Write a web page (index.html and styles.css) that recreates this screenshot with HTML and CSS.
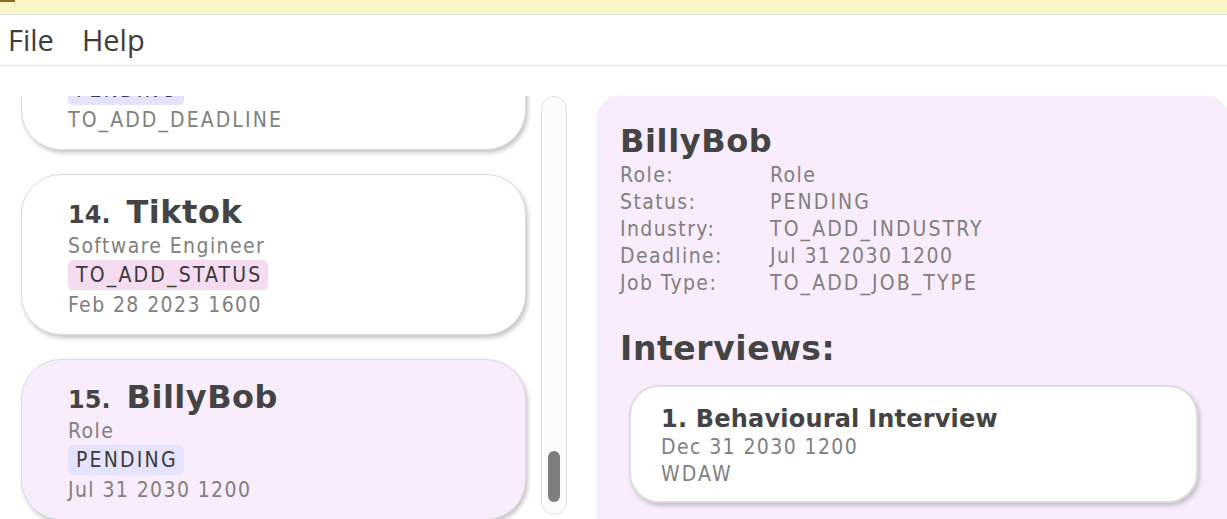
FILE: index.html
```html
<!DOCTYPE html>
<html>
<head>
<meta charset="utf-8">
<link rel="stylesheet" href="styles.css">
</head>
<body>
<div class="titlebar"><span class="titlemark"></span></div>
<div class="menubar">
  <span class="menu-item">File</span>
  <span class="menu-item">Help</span>
</div>
<div class="main">
  <div class="list-viewport">
    <div class="list-inner">
      <div class="card">
        <div class="card-spacer"></div>
        <div><span class="badge badge-pending">PENDING</span></div>
        <div class="line caps">TO_ADD_DEADLINE</div>
      </div>
      <div class="card">
        <div class="card-title"><span class="idx">14.</span><span class="name">Tiktok</span></div>
        <div class="line">Software Engineer</div>
        <div><span class="badge badge-status">TO_ADD_STATUS</span></div>
        <div class="line">Feb 28 2023 1600</div>
      </div>
      <div class="card card-selected">
        <div class="card-title"><span class="idx">15.</span><span class="name">BillyBob</span></div>
        <div class="line">Role</div>
        <div><span class="badge badge-pending">PENDING</span></div>
        <div class="line">Jul 31 2030 1200</div>
      </div>
    </div>
  </div>
  <div class="scrollbar"><div class="thumb"></div></div>
  <div class="detail">
    <div class="detail-name">BillyBob</div>
    <div class="rows">
      <div class="row"><span class="label">Role:</span><span>Role</span></div>
      <div class="row"><span class="label">Status:</span><span class="caps">PENDING</span></div>
      <div class="row"><span class="label">Industry:</span><span class="caps">TO_ADD_INDUSTRY</span></div>
      <div class="row"><span class="label">Deadline:</span><span>Jul 31 2030 1200</span></div>
      <div class="row"><span class="label">Job Type:</span><span class="caps">TO_ADD_JOB_TYPE</span></div>
    </div>
    <div class="section-title">Interviews:</div>
    <div class="interview">
      <div class="interview-title">1. Behavioural Interview</div>
      <div class="line">Dec 31 2030 1200</div>
      <div class="line caps">WDAW</div>
    </div>
  </div>
</div>
</body>
</html>
```

FILE: styles.css
```css
html, body {
  margin: 0;
  padding: 0;
  height: 519px;
  overflow: hidden;
  background: #ffffff;
  font-family: "DejaVu Sans Condensed", "DejaVu Sans", sans-serif;
}

.titlebar {
  height: 14px;
  background: #f8f5c6;
  border-bottom: 1px solid #e4e4e4;
  position: relative;
}

.titlemark {
  position: absolute;
  left: 0;
  top: 0;
  width: 15px;
  height: 2px;
  background: #8a6a2e;
}

.menubar {
  height: 50px;
  border-bottom: 1px solid #e2e2e2;
  display: flex;
  align-items: center;
  gap: 28px;
  padding-left: 8px;
  font-family: "Open Sans", "Noto Sans", sans-serif;
  font-size: 29px;
  color: #3d3d3d;
}

.menu-item {
  line-height: normal;
  margin-top: -2px;
}

.main {
  display: flex;
  align-items: flex-start;
  padding-top: 30px;
  height: 423px;
}

.list-viewport {
  width: 535px;
  height: 423px;
  overflow: hidden;
  padding-left: 21px;
  box-sizing: border-box;
}

.list-inner {
  margin-top: -107px;
  display: flex;
  flex-direction: column;
  gap: 24px;
}

.card {
  width: 505px;
  height: 161px;
  box-sizing: border-box;
  border: 1px solid #dcdcdc;
  border-radius: 40px;
  background: #ffffff;
  box-shadow: 2px 3px 4px rgba(0, 0, 0, 0.22);
  padding: 18px 0 0 46px;
}

.card-selected {
  background: #f9ecfd;
}

.card-spacer {
  height: 67px;
}

.card-title {
  display: flex;
  align-items: baseline;
  color: #444444;
  font-family: "DejaVu Sans", sans-serif;
  font-weight: bold;
  height: 39px;
}

.idx {
  font-size: 24px;
  margin-right: 16px;
}

.name {
  font-size: 32px;
  letter-spacing: 0.5px;
}

.line {
  font-size: 21px;
  letter-spacing: 1.4px;
  color: #808080;
  line-height: 28px;
}

.caps {
  letter-spacing: 2.1px;
}

.badge {
  display: inline-block;
  font-size: 21px;
  letter-spacing: 2.2px;
  color: #3a3a3a;
  line-height: 30px;
  padding: 0 6px 0 8px;
  border-radius: 5px;
  margin-bottom: 1px;
}

.badge-pending {
  background: #e6e4fd;
}

.badge-status {
  background: #f5dcf1;
}

.scrollbar {
  margin-left: 6px;
  width: 26px;
  height: 419px;
  box-sizing: border-box;
  border: 1px solid #e4e4e4;
  border-radius: 13px;
  background: #fbfbfb;
  display: flex;
  flex-direction: column;
  justify-content: flex-end;
  align-items: center;
  padding-bottom: 12px;
}

.thumb {
  width: 12px;
  height: 51px;
  border-radius: 6px;
  background: #7e7e7e;
}

.detail {
  margin-left: 30px;
  flex: 1;
  height: 423px;
  background: #f9ecfd;
  border-radius: 22px 22px 0 0;
  padding: 24px 0 0 23px;
  box-sizing: border-box;
  box-shadow: 1px 1px 3px rgba(0, 0, 0, 0.12);
}

.detail-name {
  font-family: "DejaVu Sans", sans-serif;
  font-size: 32px;
  letter-spacing: 0.6px;
  font-weight: bold;
  color: #444444;
  line-height: 42px;
}

.rows {
  font-size: 21px;
  letter-spacing: 1.4px;
  color: #808080;
}

.row {
  display: flex;
  line-height: 27px;
}

.label {
  width: 150px;
}

.section-title {
  margin-top: 32px;
  font-family: "DejaVu Sans", sans-serif;
  font-size: 33px;
  letter-spacing: 0.6px;
  font-weight: bold;
  color: #444444;
  line-height: 40px;
}

.interview {
  margin: 16px 0 0 9px;
  width: 569px;
  height: 118px;
  box-sizing: border-box;
  background: #ffffff;
  border: 2px solid #dddddd;
  border-radius: 30px;
  box-shadow: 2px 3px 4px rgba(0, 0, 0, 0.2);
  padding: 17px 0 0 30px;
}

.interview-title {
  font-family: "DejaVu Sans", sans-serif;
  font-size: 24px;
  letter-spacing: 0.2px;
  font-weight: bold;
  color: #444444;
  line-height: 30px;
}

.interview .line {
  line-height: 27px;
}
```
